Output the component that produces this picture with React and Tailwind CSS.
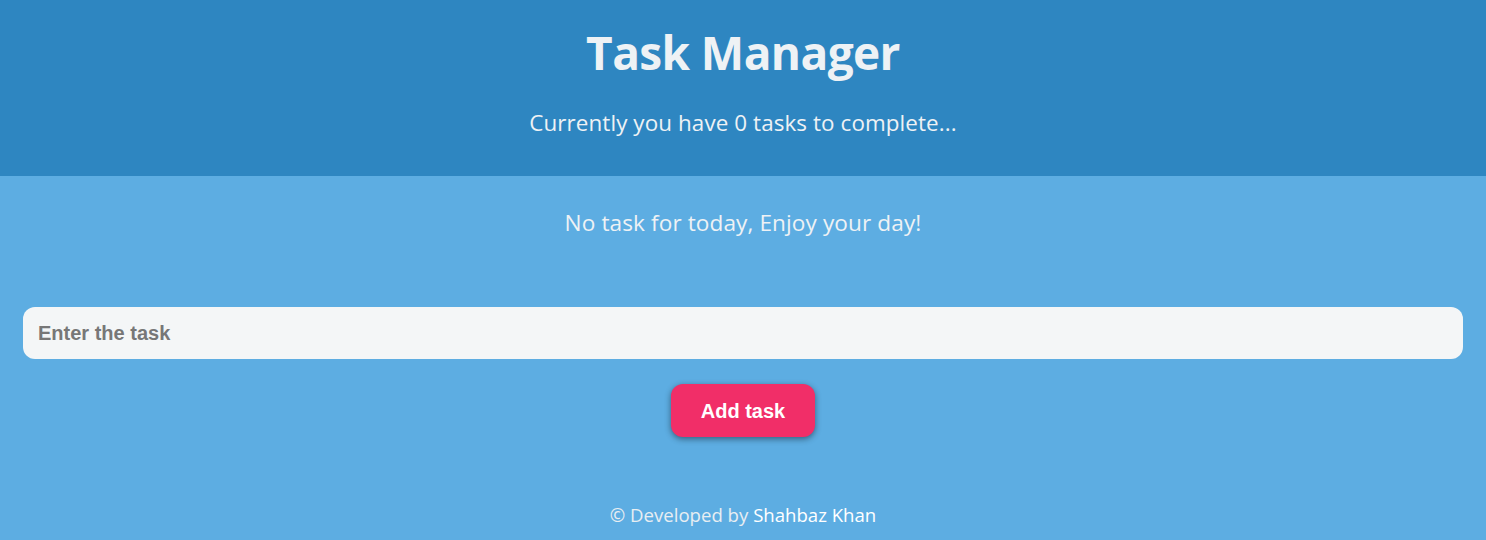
export default function App() {
  return (
    <main className="min-h-[540px] bg-[#5dade2] font-['Open_Sans','Noto_Sans',sans-serif] text-[#eef2f5]">
      {/* Header */}
      <header className="bg-[#2e86c1] h-[176px] flex flex-col items-center pt-[20px]">
        <h1 className="text-[46px] font-bold leading-[64px] tracking-[-0.6px]">Task Manager</h1>
        <p className="mt-[24px] text-[22.4px] leading-[30px] tracking-[0.1px]">Currently you have 0 tasks to complete...</p>
      </header>

      {/* Task list */}
      <section className="flex flex-col items-center pt-[32px]">
        <p className="text-[22.6px] leading-[30px] tracking-[0.1px]">No task for today, Enjoy your day!</p>
      </section>

      {/* New task form */}
      <form className="px-[23px] pt-[69px] flex flex-col items-center" onSubmit={(e) => e.preventDefault()}>
        <input
          type="text"
          placeholder="Enter the task"
          className="w-full h-[52px] rounded-[12px] bg-[#f4f6f7] px-[15px] font-['Liberation_Sans',Arial,sans-serif] text-[20px] font-bold text-[#555] placeholder:text-[#777] outline-none"
        />
        <button
          type="submit"
          className="mt-[25px] w-[144px] h-[53px] rounded-[12px] bg-[#f12e68] font-['Liberation_Sans',Arial,sans-serif] text-[20px] font-bold text-white shadow-[0_2px_6px_rgba(0,0,0,0.45)]"
        >
          Add task
        </button>
      </form>

      {/* Footer */}
      <footer className="flex justify-center pt-[65px] pb-[6px] text-[18.6px] leading-[26px]">
        <span className="text-[#e8eef2]">© Developed by <span className="text-white">Shahbaz Khan</span></span>
      </footer>
    </main>
  );
}
